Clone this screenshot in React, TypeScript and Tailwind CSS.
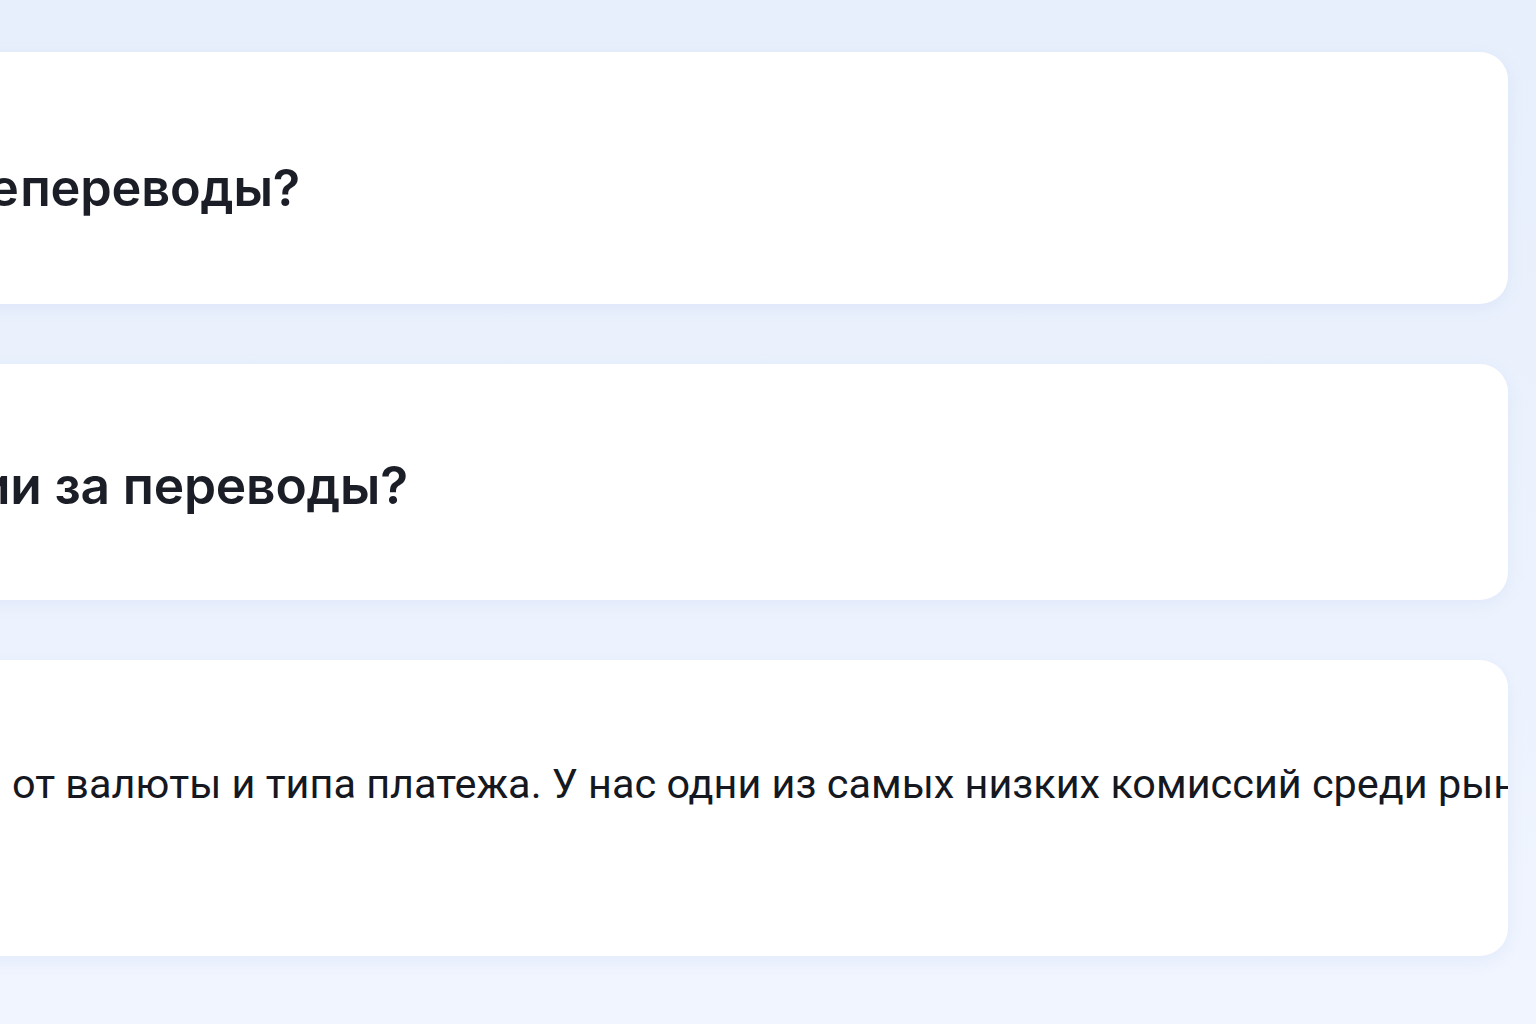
import React from "react";

const questions = [
  "Как отправить международные переводы?",
  "Какие комиссии за переводы?",
];

const answer = {
  lead: "Комиссия зависит",
  rest: "от валюты и типа платежа. У нас одни из самых низких комиссий среди рыночных предложений.",
};

export default function App() {
  return (
    <div className="min-h-[1024px] w-[1536px] overflow-hidden bg-gradient-to-b from-[#e7effc] to-[#f0f5ff] pt-[52px]">
      <div className="-ml-[400px] mr-[28px] flex flex-col gap-[60px]">
        <div className="flex h-[252px] items-center overflow-hidden rounded-[28px] bg-white shadow-[0_4px_16px_rgba(120,150,210,0.10)]">
          <div className="flex w-[700px] shrink-0 justify-end">
            <h3 className="whitespace-nowrap pt-[20px] font-['Inter',sans-serif] text-[50.5px] font-semibold leading-none tracking-[-0.2px] text-[#1b1e26] [word-spacing:-11px]">
              {questions[0]}
            </h3>
          </div>
        </div>
        <div className="flex h-[236px] items-center overflow-hidden rounded-[28px] bg-white shadow-[0_4px_16px_rgba(120,150,210,0.10)]">
          <div className="flex w-[808px] shrink-0 justify-end">
            <h3 className="whitespace-nowrap pt-[8px] font-['Inter',sans-serif] text-[51.5px] font-semibold leading-none tracking-[-0.2px] text-[#1b1e26]">
              {questions[1]}
            </h3>
          </div>
        </div>
        <div className="flex h-[296px] items-start overflow-hidden rounded-[28px] bg-white pt-[100px] shadow-[0_4px_16px_rgba(120,150,210,0.10)]">
          <div className="flex w-[412px] shrink-0 justify-end pr-[14px]">
            <span className="whitespace-nowrap font-['Roboto',sans-serif] text-[41.4px] leading-[48px] text-[#15181f]">
              {answer.lead}
            </span>
          </div>
          <p className="whitespace-nowrap font-['Roboto',sans-serif] text-[41.4px] leading-[48px] text-[#15181f]">
            {answer.rest}
          </p>
        </div>
      </div>
    </div>
  );
}
